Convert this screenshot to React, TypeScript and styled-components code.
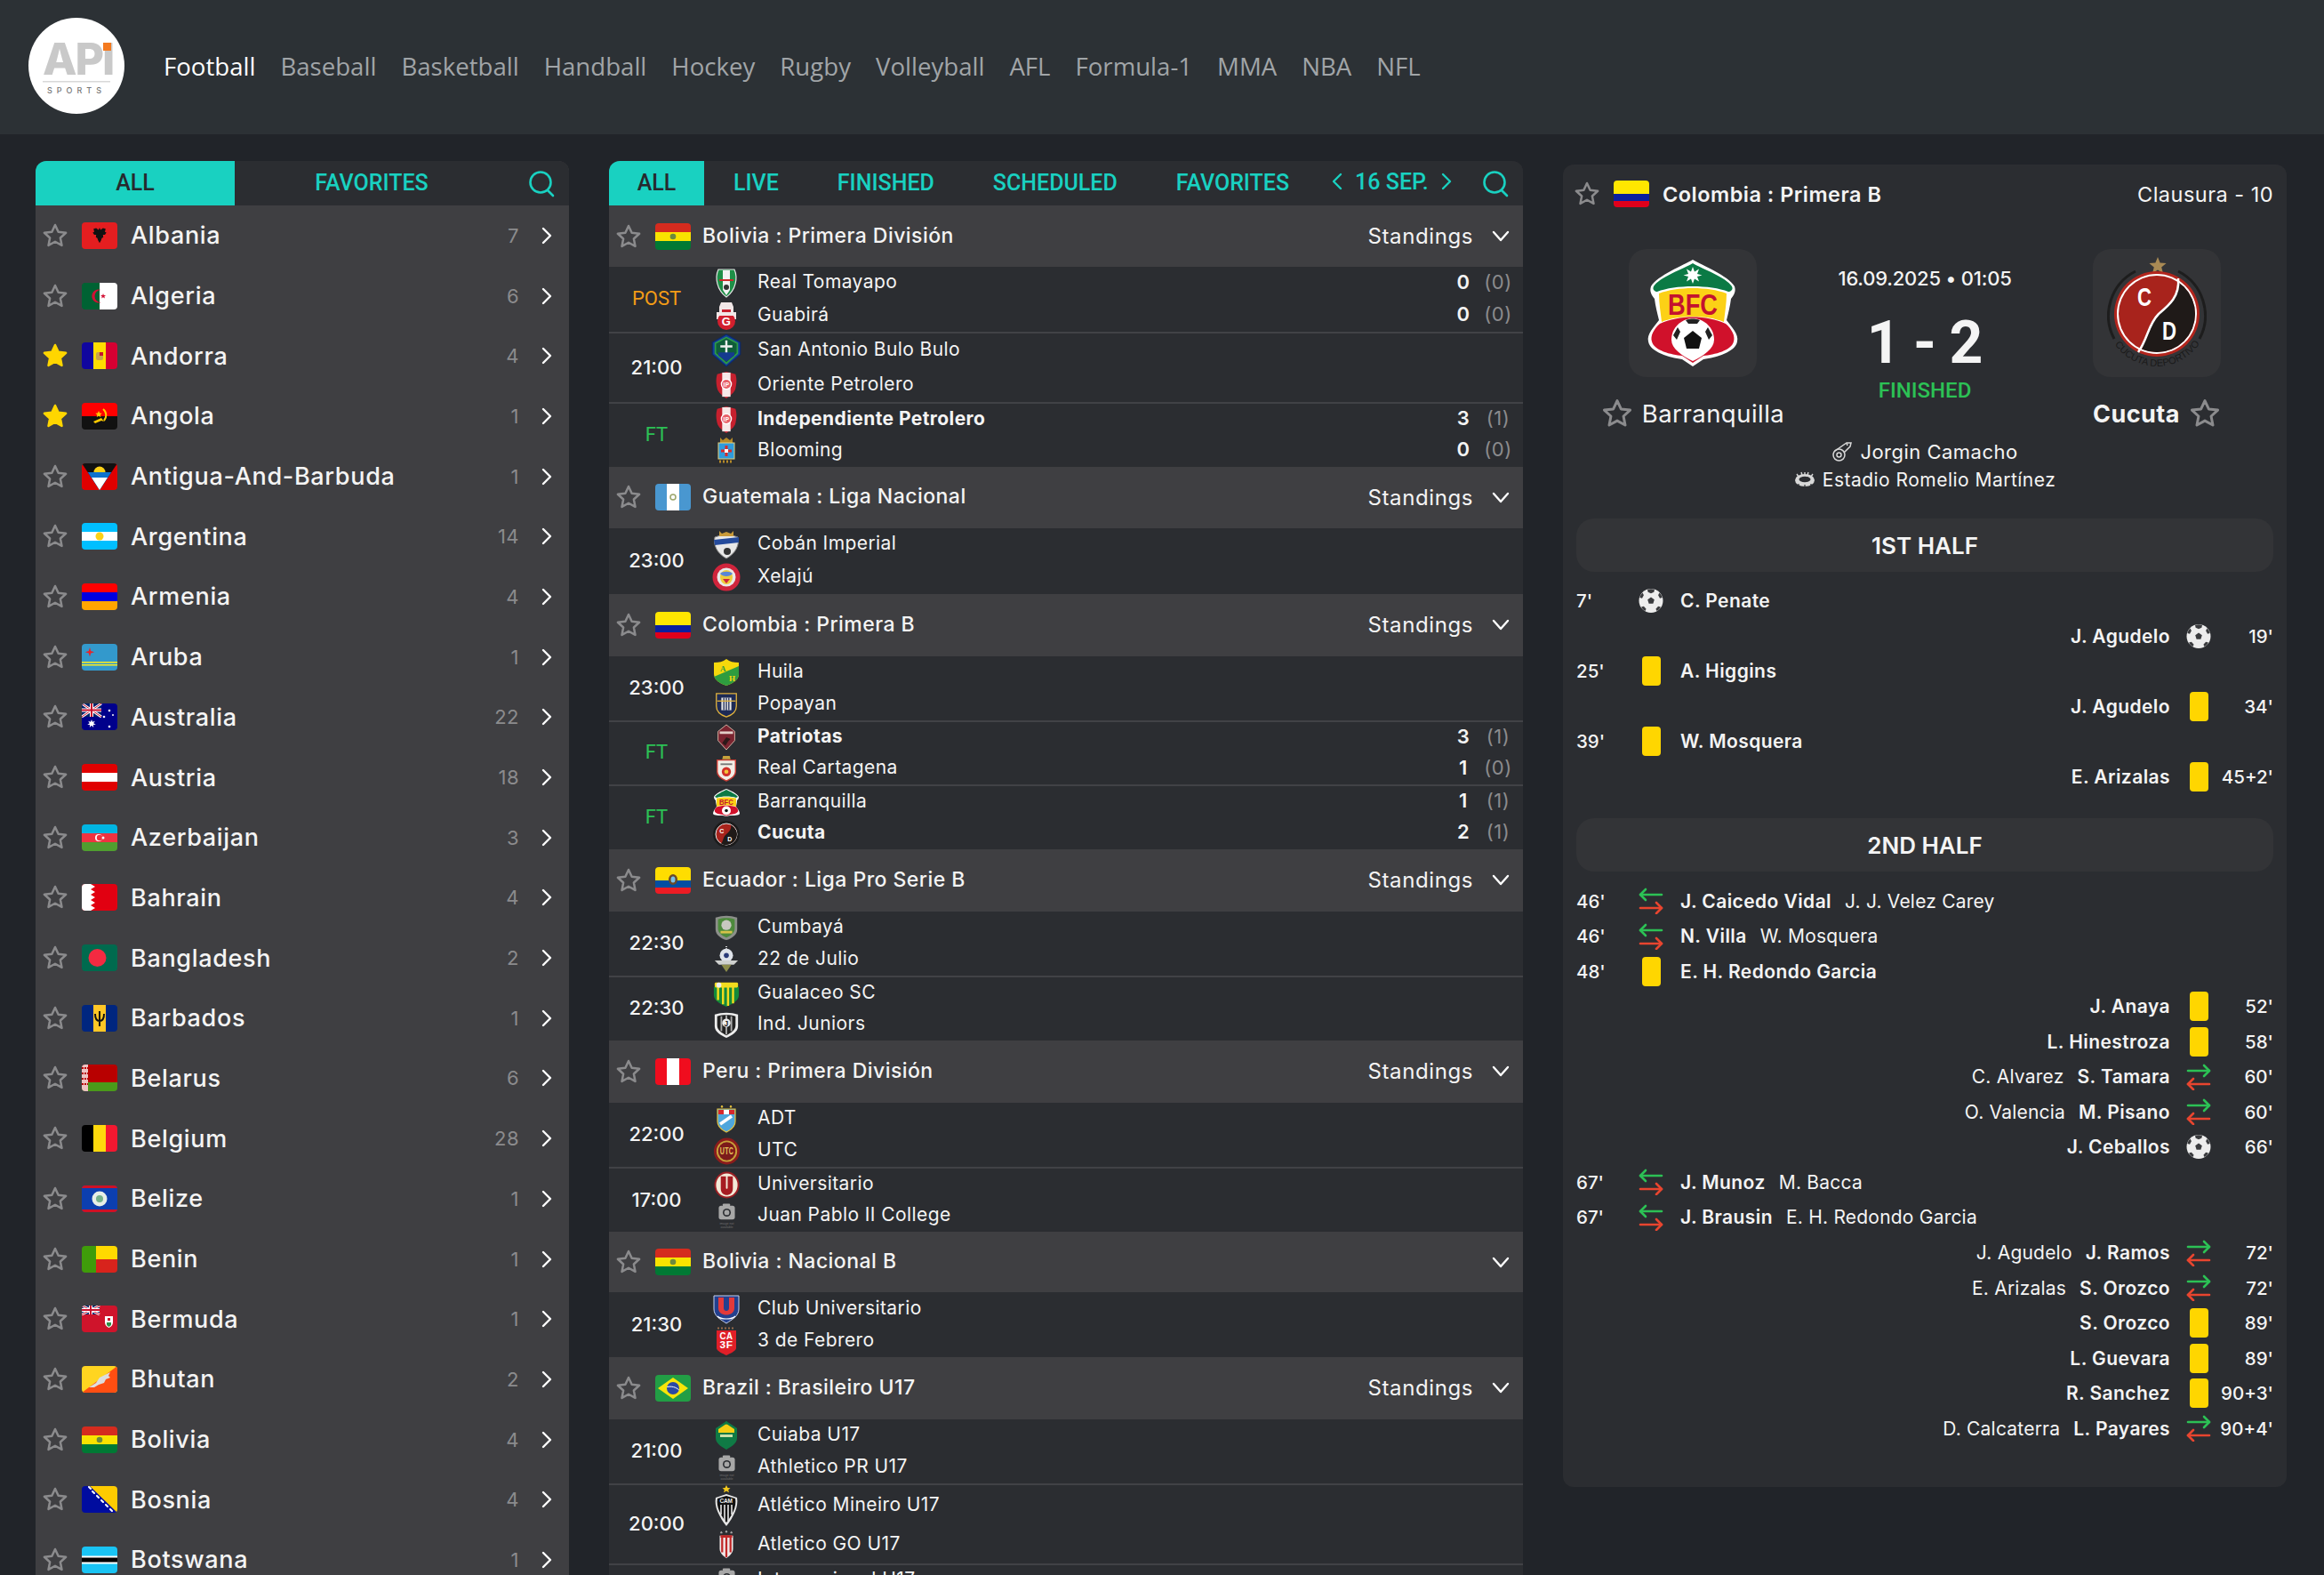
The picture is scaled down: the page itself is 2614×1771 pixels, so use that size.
import React from 'react'
import styled, { createGlobalStyle } from 'styled-components'

const colors = {
  page: '#212429',
  top: '#2c3135',
  panel: '#2b2d31',
  band: '#3f3f42',
  tile: '#333437',
  line: '#414246',
  accent: '#19d1c1',
  gray: '#8b8b8d',
  white: '#f4f4f4',
  yellow: '#ffd600',
  green: '#2cc155',
  red: '#e8452f',
  orange: '#f39c16',
}

const GlobalStyle = createGlobalStyle`
  html, body {
    margin: 0;
    height: 1771px;
    overflow: hidden;
    background: ${colors.page};
    color: ${colors.white};
    font-family: 'Inter', 'Liberation Sans', sans-serif;
    letter-spacing: 0.03em;
  }
`

const Page = styled.div`
  width: 2614px;
  height: 1771px;
  overflow: hidden;
`

const TopBar = styled.header`
  height: 151px;
  background: ${colors.top};
  display: flex;
  align-items: center;
  padding-left: 32px;
  padding-bottom: 3px;
  box-sizing: border-box;
`

const LogoSvg = styled.svg`
  width: 108px;
  height: 108px;
  margin-right: 44px;
  flex: none;
`

const Nav = styled.nav`
  display: flex;
  gap: 28px;
`

const NavItem = styled.span<{ $active?: boolean }>`
  font-family: 'Open Sans', sans-serif;
  font-size: 27.6px;
  letter-spacing: 0;
  color: ${(p) => (p.$active ? '#ffffff' : '#a1a5a8')};
`

const Main = styled.main`
  display: flex;
  align-items: flex-start;
  padding: 30px 41px 0 40px;
  gap: 45px;
`

const SideColumn = styled.section`
  width: 600px;
  flex: none;
  border-radius: 12px 12px 0 0;
  overflow: hidden;
  background: ${colors.band};
`

const TabBar = styled.div`
  height: 50px;
  background: ${colors.panel};
  display: flex;
  align-items: center;
`

const Tab = styled.div<{ $active?: boolean; $w?: number }>`
  height: 100%;
  display: flex;
  align-items: center;
  justify-content: center;
  flex: none;
  box-sizing: border-box;
  width: ${(p) => (p.$w ? `${p.$w}px` : 'auto')};
  padding: ${(p) => (p.$w ? '0 0 2px' : '0 33px 2px')};
  background: ${(p) => (p.$active ? colors.accent : 'transparent')};
  color: ${(p) => (p.$active ? '#26292e' : colors.accent)};
  font-family: 'Roboto', sans-serif;
  font-weight: 500;
  font-size: 25px;
  letter-spacing: 0;
`

const DatePick = styled.div`
  display: flex;
  align-items: center;
  gap: 14px;
  margin-left: 15px;
  padding-bottom: 4px;
  color: ${colors.accent};
  font-family: 'Roboto', sans-serif;
  font-weight: 500;
  font-size: 25px;
  letter-spacing: 0;
`

const SearchWrap = styled.div`
  margin-left: auto;
  display: flex;
  padding-right: 16px;
`

const CountryRow = styled.div`
  height: 67.7px;
  display: flex;
  align-items: center;
  padding: 0 19px 0 7px;
  gap: 15px;
`

const CountryName = styled.span`
  font-size: 27px;
  font-weight: 500;
  letter-spacing: 0.025em;
  flex: 1;
`

const Count = styled.span`
  font-size: 22px;
  color: ${colors.gray};
  margin-right: 10px;
`

const MidColumn = styled.section`
  width: 1028px;
  flex: none;
  border-radius: 12px 12px 0 0;
  overflow: hidden;
  background: ${colors.panel};
`

const LeagueRow = styled.div<{ $h: number }>`
  height: ${(p) => p.$h}px;
  background: ${colors.band};
  display: flex;
  align-items: center;
  padding: 0 15px 0 7px;
`

const LeagueFlag = styled.span`
  display: flex;
  margin: 0 13px 0 15px;
`

const LeagueTitle = styled.span`
  font-size: 23px;
  font-weight: 500;
  letter-spacing: 0.02em;
  padding-bottom: 2px;
  flex: 1;
`

const Standings = styled.span`
  font-size: 24px;
  letter-spacing: 0.025em;
  margin-right: 21px;
`

const MatchRow = styled.div<{ $h: number }>`
  height: ${(p) => p.$h}px;
  box-sizing: border-box;
  display: flex;
  align-items: stretch;
  & + & {
    border-top: 2px solid ${colors.line};
  }
`

const StatusCell = styled.div<{ $color: string; $label: boolean }>`
  width: 107px;
  flex: none;
  display: flex;
  align-items: center;
  justify-content: center;
  padding-bottom: 2px;
  font-family: ${(p) => (p.$label ? "'Roboto', sans-serif" : "'Inter', sans-serif")};
  font-size: 22px;
  font-weight: ${(p) => (p.$label ? 400 : 500)};
  letter-spacing: 0;
  color: ${(p) => p.$color};
`

const Teams = styled.div`
  flex: 1;
  display: flex;
  flex-direction: column;
`

const TeamLine = styled.div`
  flex: 1;
  display: flex;
  align-items: center;
  padding-right: 8px;
`

const CrestBox = styled.div`
  width: 44px;
  margin: 0 13px 0 3px;
  display: flex;
  justify-content: center;
  flex: none;
`

const TeamName = styled.span<{ $bold?: boolean }>`
  flex: 1;
  font-size: 21px;
  letter-spacing: 0.02em;
  padding-bottom: 3px;
  font-weight: ${(p) => (p.$bold ? 700 : 400)};
`

const Goals = styled.span`
  width: 30px;
  text-align: center;
  font-size: 22px;
  font-weight: 600;
  padding-bottom: 3px;
`

const HalfGoals = styled.span`
  width: 40px;
  margin-left: 4px;
  text-align: center;
  font-size: 22px;
  padding-bottom: 3px;
  color: ${colors.gray};
`

const DetailColumn = styled.section`
  width: 814px;
  flex: none;
  box-sizing: border-box;
  margin-top: 4px;
  padding: 18px 15px 46px 15px;
  border-radius: 12px;
  background: ${colors.panel};
`

const DetailHead = styled.div`
  display: flex;
  align-items: center;
  gap: 15px;
  margin-left: -3px;
`

const DetailTitle = styled.span`
  font-size: 23.5px;
  font-weight: 600;
  flex: 1;
`

const Round = styled.span`
  font-size: 23.5px;
`

const Versus = styled.div`
  margin-top: 47px;
  display: grid;
  grid-template-columns: 262px 1fr 262px;
`

const TeamSide = styled.div`
  display: flex;
  flex-direction: column;
  align-items: center;
`

const CrestTile = styled.div`
  width: 144px;
  height: 144px;
  border-radius: 20px;
  background: ${colors.tile};
  display: flex;
  align-items: center;
  justify-content: center;
`

const TeamCaption = styled.div`
  margin-top: 25px;
  height: 32px;
  display: flex;
  align-items: center;
  gap: 10px;
`

const CaptionText = styled.span<{ $bold?: boolean }>`
  font-size: ${(p) => (p.$bold ? 27 : 27.5)}px;
  font-weight: ${(p) => (p.$bold ? 700 : 400)};
`

const Center = styled.div`
  padding-top: 17px;
  display: flex;
  flex-direction: column;
  align-items: center;
`

const DateLine = styled.div`
  font-size: 22px;
  font-weight: 500;
  line-height: 32px;
  letter-spacing: -0.2px;
`

const Score = styled.div`
  margin-top: 27px;
  font-family: 'Roboto', sans-serif;
  font-size: 66px;
  font-weight: 700;
  line-height: 60px;
  letter-spacing: 0;
  word-spacing: -2px;
`

const Finished = styled.div`
  margin-top: 10px;
  font-family: 'Roboto', sans-serif;
  font-weight: 500;
  font-size: 24px;
  line-height: 26px;
  letter-spacing: 0;
  color: ${colors.green};
`

const InfoLine = styled.div<{ $top: number; $size: number }>`
  margin-top: ${(p) => p.$top}px;
  height: 30px;
  display: flex;
  align-items: center;
  justify-content: center;
  gap: 8px;
  font-size: ${(p) => p.$size}px;
`

const HalfBar = styled.div<{ $top: number; $bottom: number }>`
  margin: ${(p) => p.$top}px 0 ${(p) => p.$bottom}px;
  height: 60px;
  border-radius: 20px;
  background: ${colors.tile};
  display: flex;
  align-items: center;
  justify-content: center;
  font-size: 26px;
  font-weight: 600;
  letter-spacing: 0;
`

const EventRow = styled.div<{ $right?: boolean }>`
  height: 39.55px;
  display: flex;
  align-items: center;
  flex-direction: ${(p) => (p.$right ? 'row-reverse' : 'row')};
  font-size: 21px;
`

const EventMinute = styled.span<{ $right?: boolean }>`
  width: 70px;
  flex: none;
  font-size: 20.5px;
  font-weight: 500;
  letter-spacing: 0;
  text-align: ${(p) => (p.$right ? 'right' : 'left')};
`

const EventIcon = styled.span`
  width: 28px;
  flex: none;
  display: flex;
  justify-content: center;
`

const EventName = styled.span<{ $right?: boolean }>`
  font-weight: 600;
  letter-spacing: 0.02em;
  margin: ${(p) => (p.$right ? '0 18px 0 0' : '0 0 0 19px')};
`

const EventAssist = styled.span<{ $right?: boolean }>`
  letter-spacing: 0.01em;
  margin: ${(p) => (p.$right ? '0 15px 0 0' : '0 0 0 15px')};
`

const YellowCard = styled.span`
  width: 21px;
  height: 33px;
  border-radius: 4px;
  background: ${colors.yellow};
`

const FlagSvg = styled.svg`
  width: 40px;
  height: 30px;
  border-radius: 4px;
  flex: none;
  display: block;
`

const Star = ({ filled, size = 30 }: { filled?: boolean; size?: number }) => (
  <svg width={size} height={size} viewBox="0 0 24 24" style={{ flex: 'none' }}>
    <path
      d="M12 2.4l2.9 6.2 6.8.8-5 4.6 1.3 6.7-6-3.3-6 3.3 1.3-6.7-5-4.6 6.8-.8z"
      fill={filled ? colors.yellow : 'none'}
      stroke={filled ? colors.yellow : colors.gray}
      strokeWidth="2"
      strokeLinejoin="round"
    />
  </svg>
)

const Chevron = ({ dir = 'right', color = '#ffffff' }: { dir?: 'right' | 'left' | 'down'; color?: string }) => {
  if (dir === 'down') {
    return (
      <svg width="20" height="13" viewBox="0 0 20 13" style={{ flex: 'none' }}>
        <polyline points="2,2 10,11 18,2" fill="none" stroke={color} strokeWidth="2.4" strokeLinecap="round" strokeLinejoin="round" />
      </svg>
    )
  }
  const pts = dir === 'right' ? '2,2 10,10 2,18' : '10,2 2,10 10,18'
  return (
    <svg width="12" height="20" viewBox="0 0 12 20" style={{ flex: 'none' }}>
      <polyline points={pts} fill="none" stroke={color} strokeWidth="2.4" strokeLinecap="round" strokeLinejoin="round" />
    </svg>
  )
}

const SearchIcon = () => (
  <svg width="30" height="31" viewBox="0 0 30 31">
    <circle cx="14" cy="14" r="11.5" fill="none" stroke={colors.accent} strokeWidth="2.6" />
    <line x1="22" y1="23" x2="28" y2="29" stroke={colors.accent} strokeWidth="2.6" strokeLinecap="round" />
  </svg>
)

const Ball = () => (
  <svg width="29" height="29" viewBox="0 0 28 28">
    <circle cx="14" cy="14" r="13.5" fill="#ededed" />
    <path d="M14 10l3.800 2.800-1.400 4.500h-4.800l-1.400-4.500z" fill="#3a3b3e" />
    <path d="M10 1.200c2.600-.7 5.400-.7 8 0l-.6 3-3.400 1.600-3.400-1.600zM26.600 10.500l-2.600.8-1.900-3.500 1.300-2.800c1.700 1.500 2.800 3.400 3.200 5.500zM1.400 10.500c.4-2.100 1.500-4 3.200-5.500l1.300 2.800-1.900 3.500zM7.500 25.500c-2-1-3.400-2.500-4.400-4.500l2.800-.7 2.700 3zM20.500 25.500l-1.100-2.200 2.700-3 2.800.7c-1 2-2.400 3.500-4.400 4.500z" fill="#3a3b3e" />
  </svg>
)

const SubArrows = ({ flip }: { flip?: boolean }) => (
  <svg width="28" height="30" viewBox="0 0 28 30">
    <g fill="none" strokeWidth="2.600" strokeLinecap="round" strokeLinejoin="round">
      <g stroke={colors.green} transform={flip ? 'translate(28 0) scale(-1 1)' : undefined}>
        <line x1="2" y1="8" x2="26" y2="8" />
        <polyline points="8,2 2,8 8,14" />
      </g>
      <g stroke={colors.red} transform={flip ? 'translate(28 0) scale(-1 1)' : undefined}>
        <line x1="2" y1="23" x2="26" y2="23" />
        <polyline points="20,17 26,23 20,29" />
      </g>
    </g>
  </svg>
)

const Whistle = () => (
  <svg width="24" height="24" viewBox="0 0 24 24" fill="none" stroke="#d8d8d8" strokeWidth="1.500">
    <circle cx="8.500" cy="15.500" r="6.500" />
    <circle cx="8.500" cy="15.500" r="2.500" />
    <path d="M4 11L17 2h5l-1 4-7 7" />
    <path d="M17 2l1 3" />
  </svg>
)

const Stadium = () => (
  <svg width="24" height="18" viewBox="0 0 24 18">
    <ellipse cx="12" cy="10" rx="11" ry="7" fill="#d8d8d8" />
    <ellipse cx="12" cy="9" rx="6.500" ry="3.300" fill="#2b2d31" />
    <path d="M3 3l2 3M21 3l-2 3M8 1l1 3M16 1l-1 3M12 1v2" stroke="#d8d8d8" strokeWidth="1.400" />
    <path d="M5 14v3M12 15v3M19 14v3" stroke="#2b2d31" strokeWidth="1.200" />
  </svg>
)

const UnionJack = ({ w = 20, h = 14 }: { w?: number; h?: number }) => (
  <g>
    <rect width={w} height={h} fill="#012169" />
    <path d={`M0 0L${w} ${h}M${w} 0L0 ${h}`} stroke="#fff" strokeWidth="2.800" />
    <path d={`M0 0L${w} ${h}M${w} 0L0 ${h}`} stroke="#c8102e" strokeWidth="1" />
    <path d={`M${w / 2} 0V${h}M0 ${h / 2}H${w}`} stroke="#fff" strokeWidth="4" />
    <path d={`M${w / 2} 0V${h}M0 ${h / 2}H${w}`} stroke="#c8102e" strokeWidth="2" />
  </g>
)

const stripesH = (a: string, b: string, c: string) => (
  <>
    <rect width="40" height="10" fill={a} />
    <rect y="10" width="40" height="10" fill={b} />
    <rect y="20" width="40" height="10" fill={c} />
  </>
)

const stripesV = (a: string, b: string, c: string) => (
  <>
    <rect width="14" height="30" fill={a} />
    <rect x="13" width="14" height="30" fill={b} />
    <rect x="27" width="13" height="30" fill={c} />
  </>
)

const flags: Record<string, React.ReactNode> = {
  albania: (
    <>
      <rect width="40" height="30" fill="#e41e20" />
      <path d="M20 6l1.200 2.500 2.600-2 3 .8-.8 3.400 1.700.8-1.700 2.600-2.200 0 .4 2.600-1.700 1-.8 2.500-1.700 3-1.700-3-.8-2.500-1.700-1 .4-2.600-2.200 0-1.700-2.600 1.700-.8-.8-3.400 3-.8 2.600 2z" fill="#111" />
    </>
  ),
  algeria: (
    <>
      <rect width="20" height="30" fill="#006233" />
      <rect x="20" width="20" height="30" fill="#fff" />
      <path d="M21.500 8a7.500 7.500 0 1 0 0 14a6 6 0 1 1 0-14z" fill="#d21034" />
      <path d="M24 12l.8 2 2.200 0-1.700 1.400.7 2.200-2-1.300-1.900 1.300.7-2.200-1.700-1.400 2.200 0z" fill="#d21034" />
    </>
  ),
  andorra: (
    <>
      {stripesV('#10069f', '#fedd00', '#d50032')}
      <rect x="16" y="11" width="8" height="9" rx="2" fill="#c7a34a" />
      <rect x="20" y="11" width="4" height="4" fill="#c8102e" />
    </>
  ),
  angola: (
    <>
      <rect width="40" height="15" fill="#f00" />
      <rect y="15" width="40" height="15" fill="#111" />
      <path d="M24 7a9 9 0 0 1 1 13" fill="none" stroke="#ffcb00" strokeWidth="2" />
      <path d="M13 21l9-4 3 4-3-1-7 3z" fill="#ffcb00" />
      <path d="M19 9l1.200 2.500 2.500.3-1.900 1.700.5 2.500-2.300-1.300-2.200 1.300.5-2.500-1.900-1.700 2.500-.3z" fill="#ffcb00" />
    </>
  ),
  antigua: (
    <>
      <rect width="40" height="30" fill="#e00000" />
      <path d="M0 0h40L20 30z" fill="#111" />
      <circle cx="20" cy="10" r="6.500" fill="#fcd116" />
      <path d="M6.700 10h26.600L20 30z" fill="#0f72cd" />
      <path d="M11 16h18l-9 14z" fill="#fff" />
    </>
  ),
  argentina: (
    <>
      {stripesH('#00bfff', '#ffffff', '#00bfff')}
      <circle cx="20" cy="15" r="4.500" fill="#fcd116" />
    </>
  ),
  armenia: stripesH('#f00', '#0000e0', '#ffa500'),
  aruba: (
    <>
      <rect width="40" height="30" fill="#3399cc" />
      <rect y="20" width="40" height="1.500" fill="#fcee21" />
      <rect y="23" width="40" height="1.500" fill="#fcee21" />
      <path d="M9 4l1.200 4 4 1.200-4 1.200-1.200 4-1.200-4-4-1.200 4-1.200z" fill="#e4262c" />
    </>
  ),
  australia: (
    <>
      <rect width="40" height="30" fill="#00008b" />
      <UnionJack w={22} h={15} />
      <path d="M11 18l1 2.800 2.800-1-1.600 2.500 2.600 1.400-3 .3.400 3-2.200-2.200-2.200 2.200.400-3-3-.3 2.600-1.400-1.600-2.500 2.800 1z" fill="#fff" />
      <circle cx="31" cy="8" r="1.300" fill="#fff" />
      <circle cx="25" cy="15" r="1.300" fill="#fff" />
      <circle cx="35" cy="13" r="1" fill="#fff" />
      <circle cx="31" cy="26" r="1.300" fill="#fff" />
    </>
  ),
  austria: stripesH('#e00000', '#ffffff', '#e00000'),
  azerbaijan: (
    <>
      {stripesH('#00b5e2', '#ef3340', '#509e2f')}
      <circle cx="19" cy="15" r="4" fill="#fff" />
      <circle cx="20" cy="15" r="3.200" fill="#ef3340" />
      <circle cx="24" cy="15" r="1.500" fill="#fff" />
    </>
  ),
  bahrain: (
    <>
      <rect width="40" height="30" fill="#e10011" />
      <path d="M0 0h10l5 3-5 3 5 3-5 3 5 3-5 3 5 3-5 3 5 3-5 3H0z" fill="#fff" />
    </>
  ),
  bangladesh: (
    <>
      <rect width="40" height="30" fill="#006a4e" />
      <circle cx="17.500" cy="15" r="10" fill="#f42a41" />
    </>
  ),
  barbados: (
    <>
      {stripesV('#00267f', '#ffc726', '#00267f')}
      <path d="M20 7v17M15 10c0 6 2 8 5 8s5-2 5-8" fill="none" stroke="#111" strokeWidth="2" />
    </>
  ),
  belarus: (
    <>
      <rect width="40" height="20" fill="#b80000" />
      <rect y="20" width="40" height="10" fill="#4a9a1a" />
      <rect width="7" height="30" fill="#eec3c3" />
      <path d="M0 4h7M0 10h7M0 16h7M0 22h7" stroke="#b80000" strokeWidth="2" strokeDasharray="2 1" />
    </>
  ),
  belgium: stripesV('#000000', '#ffd90c', '#f31830'),
  belize: (
    <>
      <rect width="40" height="30" fill="#0c3fb0" />
      <rect width="40" height="3" fill="#ce1126" />
      <rect y="27" width="40" height="3" fill="#ce1126" />
      <circle cx="20" cy="15" r="8.500" fill="#e8efe6" />
      <circle cx="20" cy="15" r="4" fill="#76b28b" />
    </>
  ),
  benin: (
    <>
      <rect width="16" height="30" fill="#3f9c0a" />
      <rect x="16" width="24" height="15" fill="#ffd900" />
      <rect x="16" y="15" width="24" height="15" fill="#d8231c" />
    </>
  ),
  bermuda: (
    <>
      <rect width="40" height="30" fill="#cf142b" />
      <UnionJack w={20} h={10} />
      <path d="M26 12h9v7c0 3-2 5-4.500 6-2.500-1-4.500-3-4.500-6z" fill="#fff" />
      <path d="M28 19h5v3l-2.500 2-2.500-2z" fill="#2f8f46" />
      <rect x="29" y="14" width="3" height="3" fill="#cf142b" />
    </>
  ),
  bhutan: (
    <>
      <rect width="40" height="30" fill="#ffd520" />
      <path d="M40 0v30H0z" fill="#ff4e12" />
      <path d="M8 24l8-5 4-6 6-3 6-3-2 4 2 2-5 2-2 4-6 2-5 3z" fill="#ddd" />
    </>
  ),
  bolivia: (
    <>
      {stripesH('#d52b1e', '#f9e300', '#007934')}
      <circle cx="20" cy="15" r="3.300" fill="#6d8a3d" />
    </>
  ),
  bosnia: (
    <>
      <rect width="40" height="30" fill="#000c9f" />
      <path d="M9 0h31v30z" fill="#fecb00" />
      <path d="M8 1l2 2M12 6l2 2M17 11l2 2M22 16l2 2M27 21l2 2M32 26l2 2" stroke="#fff" strokeWidth="2" strokeLinecap="round" />
    </>
  ),
  botswana: (
    <>
      <rect width="40" height="30" fill="#19c4f4" />
      <rect y="10.500" width="40" height="9" fill="#fff" />
      <rect y="12.500" width="40" height="5" fill="#000" />
    </>
  ),
  colombia: (
    <>
      <rect width="40" height="15" fill="#ffe700" />
      <rect y="15" width="40" height="8" fill="#0a1f9e" />
      <rect y="23" width="40" height="7" fill="#e0001b" />
    </>
  ),
  guatemala: (
    <>
      {stripesV('#4997d0', '#ffffff', '#4997d0')}
      <circle cx="20" cy="15" r="3" fill="none" stroke="#9aa56b" strokeWidth="1.500" />
    </>
  ),
  ecuador: (
    <>
      <rect width="40" height="15" fill="#ffdd00" />
      <rect y="15" width="40" height="8" fill="#034ea2" />
      <rect y="23" width="40" height="7" fill="#ed1c24" />
      <ellipse cx="20" cy="14" rx="5" ry="6" fill="#6a4a2a" />
      <ellipse cx="20" cy="14" rx="2.500" ry="3.500" fill="#79c0e8" />
    </>
  ),
  peru: stripesV('#f00d1e', '#ffffff', '#f00d1e'),
  brazil: (
    <>
      <rect width="40" height="30" fill="#229e45" />
      <path d="M20 3l17 12-17 12L3 15z" fill="#f8e509" />
      <circle cx="20" cy="15" r="7" fill="#2b49a3" />
      <path d="M13.200 13.500c5-1 10 0 13.600 3.500" stroke="#fff" strokeWidth="1" fill="none" />
    </>
  ),
}

const Flag = ({ code }: { code: string }) => <FlagSvg viewBox="0 0 40 30">{flags[code]}</FlagSvg>

const SHIELD = 'M4 3H28V18C28 25 22 29 16 31C10 29 4 25 4 18Z'
const POINTED = 'M5 3L16 0L27 3C29 10 28 15 27 20C26 25 20 29 16 32C12 29 6 25 5 20C4 15 3 10 5 3Z'

const crests: Record<string, React.ReactNode> = {
  tomayapo: (
    <>
      <path d="M7 1H25C29 10 27 24 16 32C5 24 3 10 7 1Z" fill="#1e8f47" stroke="#e6e6e6" strokeWidth="1.200" />
      <path d="M12 2h8v22l-4 6-4-6z" fill="#f2f2f2" />
      <rect x="8" y="12" width="16" height="2" fill="#cc2a2a" />
      <circle cx="16" cy="21" r="3" fill="#333" />
    </>
  ),
  guabira: (
    <>
      <path d="M10 1h12l2 5v6h3v8h-22v-8h3v-6z" fill="#f1e7e7" />
      <rect x="11" y="9" width="10" height="4" fill="#c8202f" />
      <circle cx="16" cy="22" r="10" fill="#d21f2e" />
      <rect x="7" y="12" width="18" height="4" fill="#f1e7e7" />
      <text x="16" y="27" textAnchor="middle" fontSize="13" fontWeight="700" fill="#fff" fontFamily="Liberation Sans">G</text>
    </>
  ),
  santo: (
    <>
      <path d="M16 0L30 8V20L16 32L2 20V8Z" fill="#143f9b" stroke="#0d2a66" strokeWidth="1" />
      <path d="M16 3L27 9V19L16 29L5 19V9Z" fill="#0f5d3a" stroke="#2d9b48" strokeWidth="1.500" />
      <path d="M16 6V25M10 12H22" stroke="#eee" strokeWidth="2.200" />
      <path d="M8 18H24V21L16 27L8 21Z" fill="#153a8f" />
    </>
  ),
  petrolero: (
    <>
      <path d={POINTED} fill="#c6202e" />
      <rect x="11" y="1" width="10" height="29" fill="#f6e8e8" />
      <circle cx="16" cy="15" r="6" fill="#e8606a" stroke="#fff" strokeWidth="1.400" />
      <text x="16" y="18" textAnchor="middle" fontSize="7" fontWeight="700" fill="#fff" fontFamily="Liberation Sans">IP</text>
    </>
  ),
  blooming: (
    <>
      <path d="M9 1l3 3 4-3 4 3 3-3v6H9z" fill="#b68a28" />
      <rect x="7" y="7" width="18" height="18" fill="#2f9bdc" stroke="#e6d07a" strokeWidth="1" />
      <path d="M16 10v12M10 16h12" stroke="#d82b2b" strokeWidth="3" />
      <rect x="14" y="14" width="4" height="4" fill="#fff" />
      <path d="M8 28h16" stroke="#b68a28" strokeWidth="3" strokeDasharray="2 2" />
    </>
  ),
  coban: (
    <>
      <path d="M3 8L16 4L29 8C31 16 27 26 16 32C5 26 1 16 3 8Z" fill="#e8e8e8" stroke="#888" strokeWidth="1" />
      <path d="M8 1l3 3 5-2 5 2 3-3v6H8z" fill="#c89a3a" />
      <path d="M2 11L30 8V14L3 17Z" fill="#254b9c" />
      <circle cx="17" cy="24" r="4" fill="#333" />
    </>
  ),
  xelaju: (
    <>
      <circle cx="16" cy="16" r="15.500" fill="#d0243c" />
      <circle cx="16" cy="16" r="10.500" fill="#e9e9e9" />
      <ellipse cx="16" cy="16" rx="7" ry="8" fill="#f0cd3c" />
      <path d="M9 12c3 4 11 4 14 0-2-3-12-3-14 0z" fill="#5a86d8" />
      <path d="M12 18h8l-4 5z" fill="#d0243c" />
    </>
  ),
  huila: (
    <>
      <path d="M2 5C8 5 12 4 16 1C20 4 24 5 30 5V18C30 25 22 29 16 31C10 29 2 25 2 18Z" fill="#f6d80c" />
      <path d="M30 9V18C30 25 22 29 16 31C10 29 2 25 2 18V21L30 9Z" fill="#2e9c3f" />
      <text x="9" y="15" fontSize="9" fontWeight="700" fill="#2e9c3f" fontFamily="Liberation Serif">A</text>
      <text x="19" y="26" fontSize="9" fontWeight="700" fill="#f6d80c" fontFamily="Liberation Serif">H</text>
    </>
  ),
  popayan: (
    <>
      <path d={SHIELD} fill="#1d2a55" stroke="#e2b33c" strokeWidth="1.400" />
      <rect x="10" y="8" width="12" height="15" fill="#e7e7e7" />
      <path d="M13 8V23M16 8V28M19 8V23" stroke="#1d2a55" strokeWidth="1.400" />
      <path d="M5 12H27" stroke="#e2b33c" strokeWidth="1.400" />
    </>
  ),
  patriotas: (
    <>
      <path d="M16 1L26 9V20L16 31L6 20V9Z" fill="#7a2430" stroke="#d8b8a8" strokeWidth="1" />
      <rect x="8" y="9" width="16" height="3" fill="#e2cfc8" />
      <path d="M11 23l5-7 5 2-3 3-3 5z" fill="#2d1a1a" />
    </>
  ),
  cartagena: (
    <>
      <path d="M12 1h8l1 4H11z" fill="#c8a23c" />
      <path d="M5 6H27V20C27 26 21 29 16 31C11 29 5 26 5 20Z" fill="#f2eee6" stroke="#c73a32" strokeWidth="1.500" />
      <circle cx="16" cy="20" r="5.500" fill="#d1302a" />
      <circle cx="16" cy="20" r="2.500" fill="#f4c53a" />
      <rect x="9" y="10" width="14" height="2" fill="#777" />
    </>
  ),
  bfcSmall: (
    <>
      <path d="M16 1C21 3 28 6 30 10C30 12 29 13 28 14C28 17 27 19 27 21C29 24 31 26 31 29C30 31 24 31 20 31L16 32L12 31C8 31 2 31 1 29C1 26 3 24 5 21C5 19 4 17 4 14C3 13 2 12 2 10C4 6 11 3 16 1Z" fill="#fff" />
      <path d="M16 2C20 4 27 7 29 10L27 11C21 9 11 9 5 11L3 10C5 7 12 4 16 2Z" fill="#0b7a45" />
      <path d="M5 11.500C11 10 21 10 27 11.500V21C21 19 11 19 5 21Z" fill="#fcd116" />
      <path d="M5 21.500C11 19 21 19 27 21.500C31 26 30 29 20 30L16 31.500L12 30C2 29 1 26 5 21.500Z" fill="#d0112b" />
      <circle cx="16" cy="25.500" r="5" fill="#fff" />
      <circle cx="16" cy="25.500" r="1.800" fill="#111" />
      <text x="16" y="18.500" textAnchor="middle" fontSize="8.500" fontWeight="700" fill="#c4122f" fontFamily="Liberation Sans" letterSpacing="0" textLength="16" lengthAdjust="spacingAndGlyphs">BFC</text>
    </>
  ),
  cucutaSmall: (
    <>
      <circle cx="16" cy="17" r="15" fill="#1c1c1c" />
      <circle cx="16" cy="17" r="12" fill="#a8231c" stroke="#e8e8e8" strokeWidth="1" />
      <path d="M21 6.500C25 9 28 13 28 17C28 24 22 29 16 29C13 29 11 28.500 10 28C13 24 12 20 16 17C20 14 22 10 21 6.500Z" fill="#1f1a18" />
      <text x="11" y="16" textAnchor="middle" fontSize="7" fontWeight="700" fill="#fff" fontFamily="Liberation Sans">C</text>
      <text x="20" y="25" textAnchor="middle" fontSize="7" fontWeight="700" fill="#fff" fontFamily="Liberation Sans">D</text>
    </>
  ),
  cumbaya: (
    <>
      <path d="M3 4C12 1 20 1 29 4V18C29 25 22 29 16 31C10 29 3 25 3 18Z" fill="#8c8f8a" />
      <path d="M6 6C12 4 20 4 26 6V17C26 23 20 26 16 28C12 26 6 23 6 17Z" fill="#4d8a3c" />
      <circle cx="16" cy="13" r="6" fill="#c8c8c0" />
      <rect x="9" y="20" width="14" height="3" fill="#d6c24a" />
    </>
  ),
  julio22: (
    <>
      <circle cx="16" cy="11" r="8" fill="#dfe3ea" />
      <circle cx="16" cy="11" r="3" fill="#2a3a78" />
      <path d="M2 17L30 17L25 22H7Z" fill="#cfd1cf" />
      <path d="M10 22H22L16 31Z" fill="#8c8c4a" />
      <path d="M16 0v3" stroke="#ddd" strokeWidth="2" strokeDasharray="1 1" />
    </>
  ),
  gualaceo: (
    <>
      <path d="M1 8H31V18C31 25 22 29 16 32C10 29 1 25 1 18Z" fill="#128a3a" />
      <path d="M6 8V24M12 8V29M18 8V31M24 8V28" stroke="#f2dc1e" strokeWidth="2.600" />
      <rect x="2" y="3" width="28" height="6" rx="1.500" fill="#f2dc1e" />
      <circle cx="7" cy="6" r="3" fill="#eee" />
    </>
  ),
  juniors: (
    <>
      <path d="M2 4C10 1 22 1 30 4V18C30 25 22 29 16 32C10 29 2 25 2 18Z" fill="#ededed" />
      <path d="M5 6C12 4 20 4 27 6V17C27 23 21 26 16 29C11 26 5 23 5 17Z" fill="#222" />
      <path d="M10 6V24M16 5V28M22 6V24" stroke="#aaa" strokeWidth="2" />
      <circle cx="16" cy="14" r="5" fill="#ededed" />
      <text x="16" y="18" textAnchor="middle" fontSize="9" fontWeight="700" fill="#222" fontFamily="Liberation Sans">J</text>
    </>
  ),
  adt: (
    <>
      <path d="M11 1l1 2h-2zM21 1l1 2h-2z" fill="#e8c23c" stroke="#e8c23c" />
      <path d="M6 5H26V19C26 25 20 29 16 31C12 29 6 25 6 19Z" fill="#4ea6dc" stroke="#e4c23c" strokeWidth="1.200" />
      <rect x="7" y="6" width="18" height="5" fill="#d6282c" />
      <rect x="13" y="6" width="6" height="5" fill="#fff" />
      <path d="M9 22L22 13" stroke="#fff" strokeWidth="3.500" />
    </>
  ),
  utc: (
    <>
      <ellipse cx="16" cy="16" rx="15" ry="15.500" fill="#8b1c1c" />
      <ellipse cx="16" cy="16" rx="12" ry="12.500" fill="#c7a23a" />
      <ellipse cx="16" cy="16" rx="10" ry="10.500" fill="#7c1a1a" />
      <text x="16" y="20" textAnchor="middle" fontSize="11" fontWeight="700" fill="#e4c25a" fontFamily="Liberation Sans" textLength="16" lengthAdjust="spacingAndGlyphs">UTC</text>
    </>
  ),
  universitario: (
    <>
      <ellipse cx="16" cy="16" rx="14.500" ry="15.500" fill="#9c1f24" />
      <ellipse cx="16" cy="16" rx="12.500" ry="13.500" fill="#f3ead8" />
      <path d="M9 6h6v13c0 2 2 2 2 0V6h6v14c0 10-14 10-14 0z" fill="#a61c22" />
    </>
  ),
  noimage: (
    <>
      <rect x="6" y="3" width="20" height="17" rx="3" fill="#a7a7a7" />
      <rect x="11" y="0.500" width="9" height="4" rx="1" fill="#a7a7a7" />
      <circle cx="16" cy="11.500" r="5" fill="#2b2d31" />
      <circle cx="16" cy="11.500" r="3.200" fill="#a7a7a7" />
      <text x="16" y="26" textAnchor="middle" fontSize="4" fill="#6e6e6e" fontFamily="Liberation Sans" letterSpacing="0">image not</text>
      <text x="16" y="31" textAnchor="middle" fontSize="4" fill="#6e6e6e" fontFamily="Liberation Sans" letterSpacing="0">available</text>
    </>
  ),
  clubuni: (
    <>
      <path d="M2 1H30V16C30 24 22 28 16 32C10 28 2 24 2 16Z" fill="#23408e" stroke="#c8d2ee" strokeWidth="1" />
      <path d="M7 3H13V15C13 19 19 19 19 15V3H25V15C25 25 7 25 7 15Z" fill="#e33a3a" />
      <path d="M6 24C10 28 22 28 26 24" stroke="#fff" strokeWidth="1.200" fill="none" />
    </>
  ),
  febrero: (
    <>
      <path d="M5 4H27V24C27 27 20 30 16 32C12 30 5 27 5 24Z" fill="#e01f28" />
      <path d="M6 1.500h20" stroke="#9a6b4a" strokeWidth="2" strokeDasharray="2 2" />
      <text x="16" y="14" textAnchor="middle" fontSize="10" fontWeight="700" fill="#fff" fontFamily="Liberation Sans" textLength="15" lengthAdjust="spacingAndGlyphs">CA</text>
      <text x="16" y="24" textAnchor="middle" fontSize="10" fontWeight="700" fill="#fff" fontFamily="Liberation Sans" textLength="15" lengthAdjust="spacingAndGlyphs">3F</text>
    </>
  ),
  cuiaba: (
    <>
      <path d="M16 0L28 8V19C28 25 21 29 16 32C11 29 4 25 4 19V8Z" fill="#0f7a45" />
      <path d="M16 3L25 9V13H7V9Z" fill="#f5cf14" />
      <rect x="9" y="15" width="14" height="3" fill="#cbe0a8" />
      <path d="M16 0v4" stroke="#0f7a45" strokeWidth="1" />
    </>
  ),
  mineiro: (
    <>
      <path d="M16 0l1.500 3 3 .3-2.300 2 .7 3-2.900-1.700-2.900 1.700.7-3-2.300-2 3-.3z" fill="#f2c81c" />
      <path d="M16 10L28 14C30 24 24 36 16 46C8 36 2 24 4 14Z" fill="#e8e8e8" />
      <path d="M16 12L26 15C28 24 22 34 16 42C10 34 4 24 6 15Z" fill="#111" />
      <path d="M10 22V33M14 22V40M18 22V40M22 22V33" stroke="#e8e8e8" strokeWidth="1.600" />
      <text x="16" y="20" textAnchor="middle" fontSize="6.500" fontWeight="700" fill="#eee" fontFamily="Liberation Sans" textLength="15" lengthAdjust="spacing">CAM</text>
    </>
  ),
  atleticogo: (
    <>
      <path d="M10 1l1 2H9zM16 0l1 2h-2zM22 1l1 2h-2z" fill="#a8a8a8" stroke="#a8a8a8" />
      <path d="M8 6H24V22C24 27 19 31 16 33C13 31 8 27 8 22Z" fill="#f0e8e8" />
      <path d="M11 7V26M16 7V32M21 7V26" stroke="#c02828" strokeWidth="2.400" />
      <path d="M9 7H23" stroke="#c02828" strokeWidth="3" />
    </>
  ),
}

const crestBoxes: Record<string, string> = {
  mineiro: '0 0 32 46',
  atleticogo: '0 0 32 34',
}

const Crest = ({ name, size = 32 }: { name: string; size?: number }) => (
  <svg height={size} width={name === 'mineiro' ? 32 : size} viewBox={crestBoxes[name] || '0 0 32 32'} style={{ display: 'block', overflow: 'visible' }}>
    {crests[name]}
  </svg>
)

const BigBarranquilla = () => (
  <svg width="100" height="120" viewBox="0 0 100 120" style={{ overflow: 'visible' }}>
    <path d="M50 0C60 6 90 18 97 30C99 36 96 40 93 44C92 52 90 60 88 68C94 76 102 84 100 92C98 104 76 110 62 112L50 120L38 112C24 110 2 104 0 92C-2 84 6 76 12 68C10 60 8 52 7 44C4 40 1 36 3 30C10 18 40 6 50 0Z" fill="#fff" />
    <path d="M50 4C60 10 88 20 94 30C96 34 92 36 90 36C70 28 30 28 10 36C8 36 4 34 6 30C12 20 40 10 50 4Z" fill="#0b7a45" />
    <path d="M50 8l2 5.500 5-3-2 5.500 5.500 1.500-5.500 1.500 2 5.500-5-3-2 5.500-2-5.500-5 3 2-5.500-5.500-1.500 5.500-1.500-2-5.500 5 3z" fill="#fff" />
    <path d="M12 38C32 30 68 30 88 38C88 50 86 60 85 70C66 62 34 62 15 70C14 60 12 50 12 38Z" fill="#fcd116" />
    <path d="M13 72C34 62 66 62 87 72C94 78 98 86 96 92C94 102 74 107 62 108L50 116L38 108C26 107 6 102 4 92C2 86 6 78 13 72Z" fill="#d0112b" />
    <path d="M26 90C26 76 38 66 50 66C62 66 74 76 74 90C74 100 62 108 50 114C38 108 26 100 26 90Z" fill="#fff" />
    <path d="M50 80l10 8-3 12H43l-3-12z" fill="#111" />
    <path d="M42 68c5-2 11-2 16 0l-3 4H45zM28 85l5-9 3 5-4 9zM72 85l-5-9-3 5 4 9z" fill="#222" />
    <text x="50" y="62" textAnchor="middle" fontSize="34" fontWeight="700" fill="#c4122f" fontFamily="Liberation Sans" letterSpacing="0" textLength="56" lengthAdjust="spacingAndGlyphs">BFC</text>
  </svg>
)

const BigCucuta = () => (
  <svg width="112" height="126" viewBox="0 0 112 126">
    <defs>
      <clipPath id="cucutaDisc">
        <circle cx="56" cy="64" r="43" />
      </clipPath>
    </defs>
    <path d="M57 0l2.600 6.500 7 .5-5.400 4.500 1.800 6.800-6-3.700-6 3.700 1.800-6.800-5.400-4.500 7-.5z" fill="#a98a54" />
    <path d="M32 16A56 56 0 0 0 8 92" fill="none" stroke="#1d1d1d" strokeWidth="3" />
    <path d="M80 16A56 56 0 0 1 104 92" fill="none" stroke="#1d1d1d" strokeWidth="3" />
    <circle cx="56" cy="64" r="48" fill="#b3251d" />
    <circle cx="56" cy="64" r="45" fill="#fff" />
    <circle cx="56" cy="64" r="43" fill="#a8231c" />
    <path d="M80 22C82 44 70 54 58 64C46 76 46 92 35 112H110V22Z" fill="#1f1a18" clipPath="url(#cucutaDisc)" />
    <path d="M80 24C82 44 70 54 58 64C46 76 46 92 35 107" fill="none" stroke="#fff" strokeWidth="2.500" />
    <text x="42" y="55" textAnchor="middle" fontSize="30" fontWeight="700" fill="#fff" fontFamily="Liberation Sans" letterSpacing="0" textLength="16" lengthAdjust="spacingAndGlyphs">C</text>
    <text x="70" y="93" textAnchor="middle" fontSize="30" fontWeight="700" fill="#fff" fontFamily="Liberation Sans" letterSpacing="0" textLength="16" lengthAdjust="spacingAndGlyphs">D</text>
    <path id="cucutaArc" d="M2 86A58 58 0 0 0 110 86" fill="none" />
    <text fontSize="11" fill="#1a1a1a" fontFamily="Liberation Sans" letterSpacing="0">
      <textPath href="#cucutaArc" startOffset="10%">CUCUTA DEPORTIVO</textPath>
    </text>
  </svg>
)

const NAV = ['Football', 'Baseball', 'Basketball', 'Handball', 'Hockey', 'Rugby', 'Volleyball', 'AFL', 'Formula-1', 'MMA', 'NBA', 'NFL']

const COUNTRIES: [string, string, number, boolean?][] = [
  ['Albania', 'albania', 7],
  ['Algeria', 'algeria', 6],
  ['Andorra', 'andorra', 4, true],
  ['Angola', 'angola', 1, true],
  ['Antigua-And-Barbuda', 'antigua', 1],
  ['Argentina', 'argentina', 14],
  ['Armenia', 'armenia', 4],
  ['Aruba', 'aruba', 1],
  ['Australia', 'australia', 22],
  ['Austria', 'austria', 18],
  ['Azerbaijan', 'azerbaijan', 3],
  ['Bahrain', 'bahrain', 4],
  ['Bangladesh', 'bangladesh', 2],
  ['Barbados', 'barbados', 1],
  ['Belarus', 'belarus', 6],
  ['Belgium', 'belgium', 28],
  ['Belize', 'belize', 1],
  ['Benin', 'benin', 1],
  ['Bermuda', 'bermuda', 1],
  ['Bhutan', 'bhutan', 2],
  ['Bolivia', 'bolivia', 4],
  ['Bosnia', 'bosnia', 4],
  ['Botswana', 'botswana', 1],
]

interface TeamData {
  name: string
  crest: string
  size?: number
  bold?: boolean
  score?: number
  half?: number
}

interface MatchData {
  status: string
  h: number
  teams: TeamData[]
}

interface LeagueData {
  flag: string
  title: string
  h: number
  standings?: boolean
  matches: MatchData[]
}

const LEAGUES: LeagueData[] = [
  {
    flag: 'bolivia',
    title: 'Bolivia : Primera División',
    h: 69,
    standings: true,
    matches: [
      { status: 'POST', h: 73, teams: [
        { name: 'Real Tomayapo', crest: 'tomayapo', score: 0, half: 0 },
        { name: 'Guabirá', crest: 'guabira', score: 0, half: 0 },
      ] },
      { status: '21:00', h: 79, teams: [
        { name: 'San Antonio Bulo Bulo', crest: 'santo', size: 36 },
        { name: 'Oriente Petrolero', crest: 'petrolero', size: 30 },
      ] },
      { status: 'FT', h: 72.5, teams: [
        { name: 'Independiente Petrolero', crest: 'petrolero', size: 30, bold: true, score: 3, half: 1 },
        { name: 'Blooming', crest: 'blooming', score: 0, half: 0 },
      ] },
    ],
  },
  {
    flag: 'guatemala',
    title: 'Guatemala : Liga Nacional',
    h: 69,
    standings: true,
    matches: [
      { status: '23:00', h: 74, teams: [
        { name: 'Cobán Imperial', crest: 'coban' },
        { name: 'Xelajú', crest: 'xelaju' },
      ] },
    ],
  },
  {
    flag: 'colombia',
    title: 'Colombia : Primera B',
    h: 70,
    standings: true,
    matches: [
      { status: '23:00', h: 72, teams: [
        { name: 'Huila', crest: 'huila' },
        { name: 'Popayan', crest: 'popayan', size: 30 },
      ] },
      { status: 'FT', h: 72.5, teams: [
        { name: 'Patriotas', crest: 'patriotas', size: 30, bold: true, score: 3, half: 1 },
        { name: 'Real Cartagena', crest: 'cartagena', size: 30, score: 1, half: 0 },
      ] },
      { status: 'FT', h: 72.5, teams: [
        { name: 'Barranquilla', crest: 'bfcSmall', score: 1, half: 1 },
        { name: 'Cucuta', crest: 'cucutaSmall', bold: true, score: 2, half: 1 },
      ] },
    ],
  },
  {
    flag: 'ecuador',
    title: 'Ecuador : Liga Pro Serie B',
    h: 70,
    standings: true,
    matches: [
      { status: '22:30', h: 72.5, teams: [
        { name: 'Cumbayá', crest: 'cumbaya', size: 30 },
        { name: '22 de Julio', crest: 'julio22', size: 30 },
      ] },
      { status: '22:30', h: 72.5, teams: [
        { name: 'Gualaceo SC', crest: 'gualaceo', size: 30 },
        { name: 'Ind. Juniors', crest: 'juniors', size: 30 },
      ] },
    ],
  },
  {
    flag: 'peru',
    title: 'Peru : Primera División',
    h: 70.4,
    standings: true,
    matches: [
      { status: '22:00', h: 72.5, teams: [
        { name: 'ADT', crest: 'adt', size: 32 },
        { name: 'UTC', crest: 'utc', size: 31 },
      ] },
      { status: '17:00', h: 72.5, teams: [
        { name: 'Universitario', crest: 'universitario', size: 31 },
        { name: 'Juan Pablo II College', crest: 'noimage', size: 29 },
      ] },
    ],
  },
  {
    flag: 'bolivia',
    title: 'Bolivia : Nacional B',
    h: 68.5,
    matches: [
      { status: '21:30', h: 72.5, teams: [
        { name: 'Club Universitario', crest: 'clubuni' },
        { name: '3 de Febrero', crest: 'febrero' },
      ] },
    ],
  },
  {
    flag: 'brazil',
    title: 'Brazil : Brasileiro U17',
    h: 70,
    standings: true,
    matches: [
      { status: '21:00', h: 72.5, teams: [
        { name: 'Cuiaba U17', crest: 'cuiaba' },
        { name: 'Athletico PR U17', crest: 'noimage', size: 29 },
      ] },
      { status: '20:00', h: 90, teams: [
        { name: 'Atlético Mineiro U17', crest: 'mineiro', size: 46 },
        { name: 'Atletico GO U17', crest: 'atleticogo', size: 32 },
      ] },
      { status: '', h: 36, teams: [{ name: 'Internacional U17', crest: 'noimage', size: 29 }] },
    ],
  },
]

type EventKind = 'goal' | 'card' | 'sub'

const FIRST_HALF: [boolean, string, EventKind, string, string?][] = [
  [false, "7'", 'goal', 'C. Penate'],
  [true, "19'", 'goal', 'J. Agudelo'],
  [false, "25'", 'card', 'A. Higgins'],
  [true, "34'", 'card', 'J. Agudelo'],
  [false, "39'", 'card', 'W. Mosquera'],
  [true, "45+2'", 'card', 'E. Arizalas'],
]

const SECOND_HALF: [boolean, string, EventKind, string, string?][] = [
  [false, "46'", 'sub', 'J. Caicedo Vidal', 'J. J. Velez Carey'],
  [false, "46'", 'sub', 'N. Villa', 'W. Mosquera'],
  [false, "48'", 'card', 'E. H. Redondo Garcia'],
  [true, "52'", 'card', 'J. Anaya'],
  [true, "58'", 'card', 'L. Hinestroza'],
  [true, "60'", 'sub', 'S. Tamara', 'C. Alvarez'],
  [true, "60'", 'sub', 'M. Pisano', 'O. Valencia'],
  [true, "66'", 'goal', 'J. Ceballos'],
  [false, "67'", 'sub', 'J. Munoz', 'M. Bacca'],
  [false, "67'", 'sub', 'J. Brausin', 'E. H. Redondo Garcia'],
  [true, "72'", 'sub', 'J. Ramos', 'J. Agudelo'],
  [true, "72'", 'sub', 'S. Orozco', 'E. Arizalas'],
  [true, "89'", 'card', 'S. Orozco'],
  [true, "89'", 'card', 'L. Guevara'],
  [true, "90+3'", 'card', 'R. Sanchez'],
  [true, "90+4'", 'sub', 'L. Payares', 'D. Calcaterra'],
]

const statusColor = (status: string): string => {
  if (status === 'POST') return colors.orange
  if (status === 'FT') return colors.green
  return colors.white
}

const EventLine = ({ right, minute, kind, name, assist }: { right: boolean; minute: string; kind: EventKind; name: string; assist?: string }) => (
  <EventRow $right={right}>
    <EventMinute $right={right}>{minute}</EventMinute>
    <EventIcon>
      {kind === 'goal' && <Ball />}
      {kind === 'card' && <YellowCard />}
      {kind === 'sub' && <SubArrows flip={right} />}
    </EventIcon>
    <EventName $right={right}>{name}</EventName>
    {assist && <EventAssist $right={right}>{assist}</EventAssist>}
  </EventRow>
)

const App = () => {
  return (
    <Page>
      <GlobalStyle />
      <TopBar>
        <LogoSvg viewBox="0 0 108 108">
          <circle cx="54" cy="54" r="54" fill="#ffffff" />
          <text x="16" y="64" fontFamily="Inter" fontSize="50" fontWeight="800" fill="#c9c9c9" letterSpacing="-2">API</text>
          <rect x="84" y="28" width="9" height="9" fill="#f47a1f" />
          <rect x="16" y="71" width="76" height="1.500" fill="#d8d8d8" />
          <text x="54" y="85" textAnchor="middle" fontFamily="Inter" fontSize="9" fontWeight="500" fill="#777" letterSpacing="5">SPORTS</text>
        </LogoSvg>
        <Nav>
          {NAV.map((item, i) => (
            <NavItem key={item} $active={i === 0}>
              {item}
            </NavItem>
          ))}
        </Nav>
      </TopBar>
      <Main>
        <SideColumn>
          <TabBar>
            <Tab $active $w={224}>ALL</Tab>
            <Tab $w={308}>FAVORITES</Tab>
            <SearchWrap>
              <SearchIcon />
            </SearchWrap>
          </TabBar>
          {COUNTRIES.map(([name, code, count, fav]) => (
            <CountryRow key={name}>
              <Star filled={fav} />
              <Flag code={code} />
              <CountryName>{name}</CountryName>
              <Count>{count}</Count>
              <Chevron />
            </CountryRow>
          ))}
        </SideColumn>
        <MidColumn>
          <TabBar>
            <Tab $active $w={107}>ALL</Tab>
            <Tab>LIVE</Tab>
            <Tab>FINISHED</Tab>
            <Tab>SCHEDULED</Tab>
            <Tab>FAVORITES</Tab>
            <DatePick>
              <Chevron dir="left" color={colors.accent} />
              16 SEP.
              <Chevron color={colors.accent} />
            </DatePick>
            <SearchWrap>
              <SearchIcon />
            </SearchWrap>
          </TabBar>
          {LEAGUES.map((league) => (
            <React.Fragment key={league.title}>
              <LeagueRow $h={league.h}>
                <Star />
                <LeagueFlag>
                  <Flag code={league.flag} />
                </LeagueFlag>
                <LeagueTitle>{league.title}</LeagueTitle>
                {league.standings && <Standings>Standings</Standings>}
                <Chevron dir="down" />
              </LeagueRow>
              <div>
                {league.matches.map((match) => (
                  <MatchRow key={match.teams[0].name} $h={match.h}>
                    <StatusCell $color={statusColor(match.status)} $label={match.status === 'POST' || match.status === 'FT'}>
                      {match.status}
                    </StatusCell>
                    <Teams>
                      {match.teams.map((team) => (
                        <TeamLine key={team.name}>
                          <CrestBox>
                            <Crest name={team.crest} size={team.size} />
                          </CrestBox>
                          <TeamName $bold={team.bold}>{team.name}</TeamName>
                          {team.score !== undefined && (
                            <>
                              <Goals>{team.score}</Goals>
                              <HalfGoals>({team.half})</HalfGoals>
                            </>
                          )}
                        </TeamLine>
                      ))}
                    </Teams>
                  </MatchRow>
                ))}
              </div>
            </React.Fragment>
          ))}
        </MidColumn>
        <DetailColumn>
          <DetailHead>
            <Star />
            <Flag code="colombia" />
            <DetailTitle>Colombia : Primera B</DetailTitle>
            <Round>Clausura - 10</Round>
          </DetailHead>
          <Versus>
            <TeamSide>
              <CrestTile>
                <BigBarranquilla />
              </CrestTile>
              <TeamCaption>
                <Star size={36} />
                <CaptionText>Barranquilla</CaptionText>
              </TeamCaption>
            </TeamSide>
            <Center>
              <DateLine>16.09.2025 • 01:05</DateLine>
              <Score>1 - 2</Score>
              <Finished>FINISHED</Finished>
            </Center>
            <TeamSide>
              <CrestTile>
                <BigCucuta />
              </CrestTile>
              <TeamCaption>
                <CaptionText $bold>Cucuta</CaptionText>
                <Star size={36} />
              </TeamCaption>
            </TeamSide>
          </Versus>
          <InfoLine $top={12} $size={22}>
            <Whistle />
            Jorgin Camacho
          </InfoLine>
          <InfoLine $top={1} $size={21}>
            <Stadium />
            Estadio Romelio Martínez
          </InfoLine>
          <HalfBar $top={29} $bottom={13}>1ST HALF</HalfBar>
          {FIRST_HALF.map(([right, minute, kind, name, assist]) => (
            <EventLine key={minute + name} right={right} minute={minute} kind={kind} name={name} assist={assist} />
          ))}
          <HalfBar $top={27} $bottom={13}>2ND HALF</HalfBar>
          {SECOND_HALF.map(([right, minute, kind, name, assist]) => (
            <EventLine key={minute + name} right={right} minute={minute} kind={kind} name={name} assist={assist} />
          ))}
        </DetailColumn>
      </Main>
    </Page>
  )
}

export default App
